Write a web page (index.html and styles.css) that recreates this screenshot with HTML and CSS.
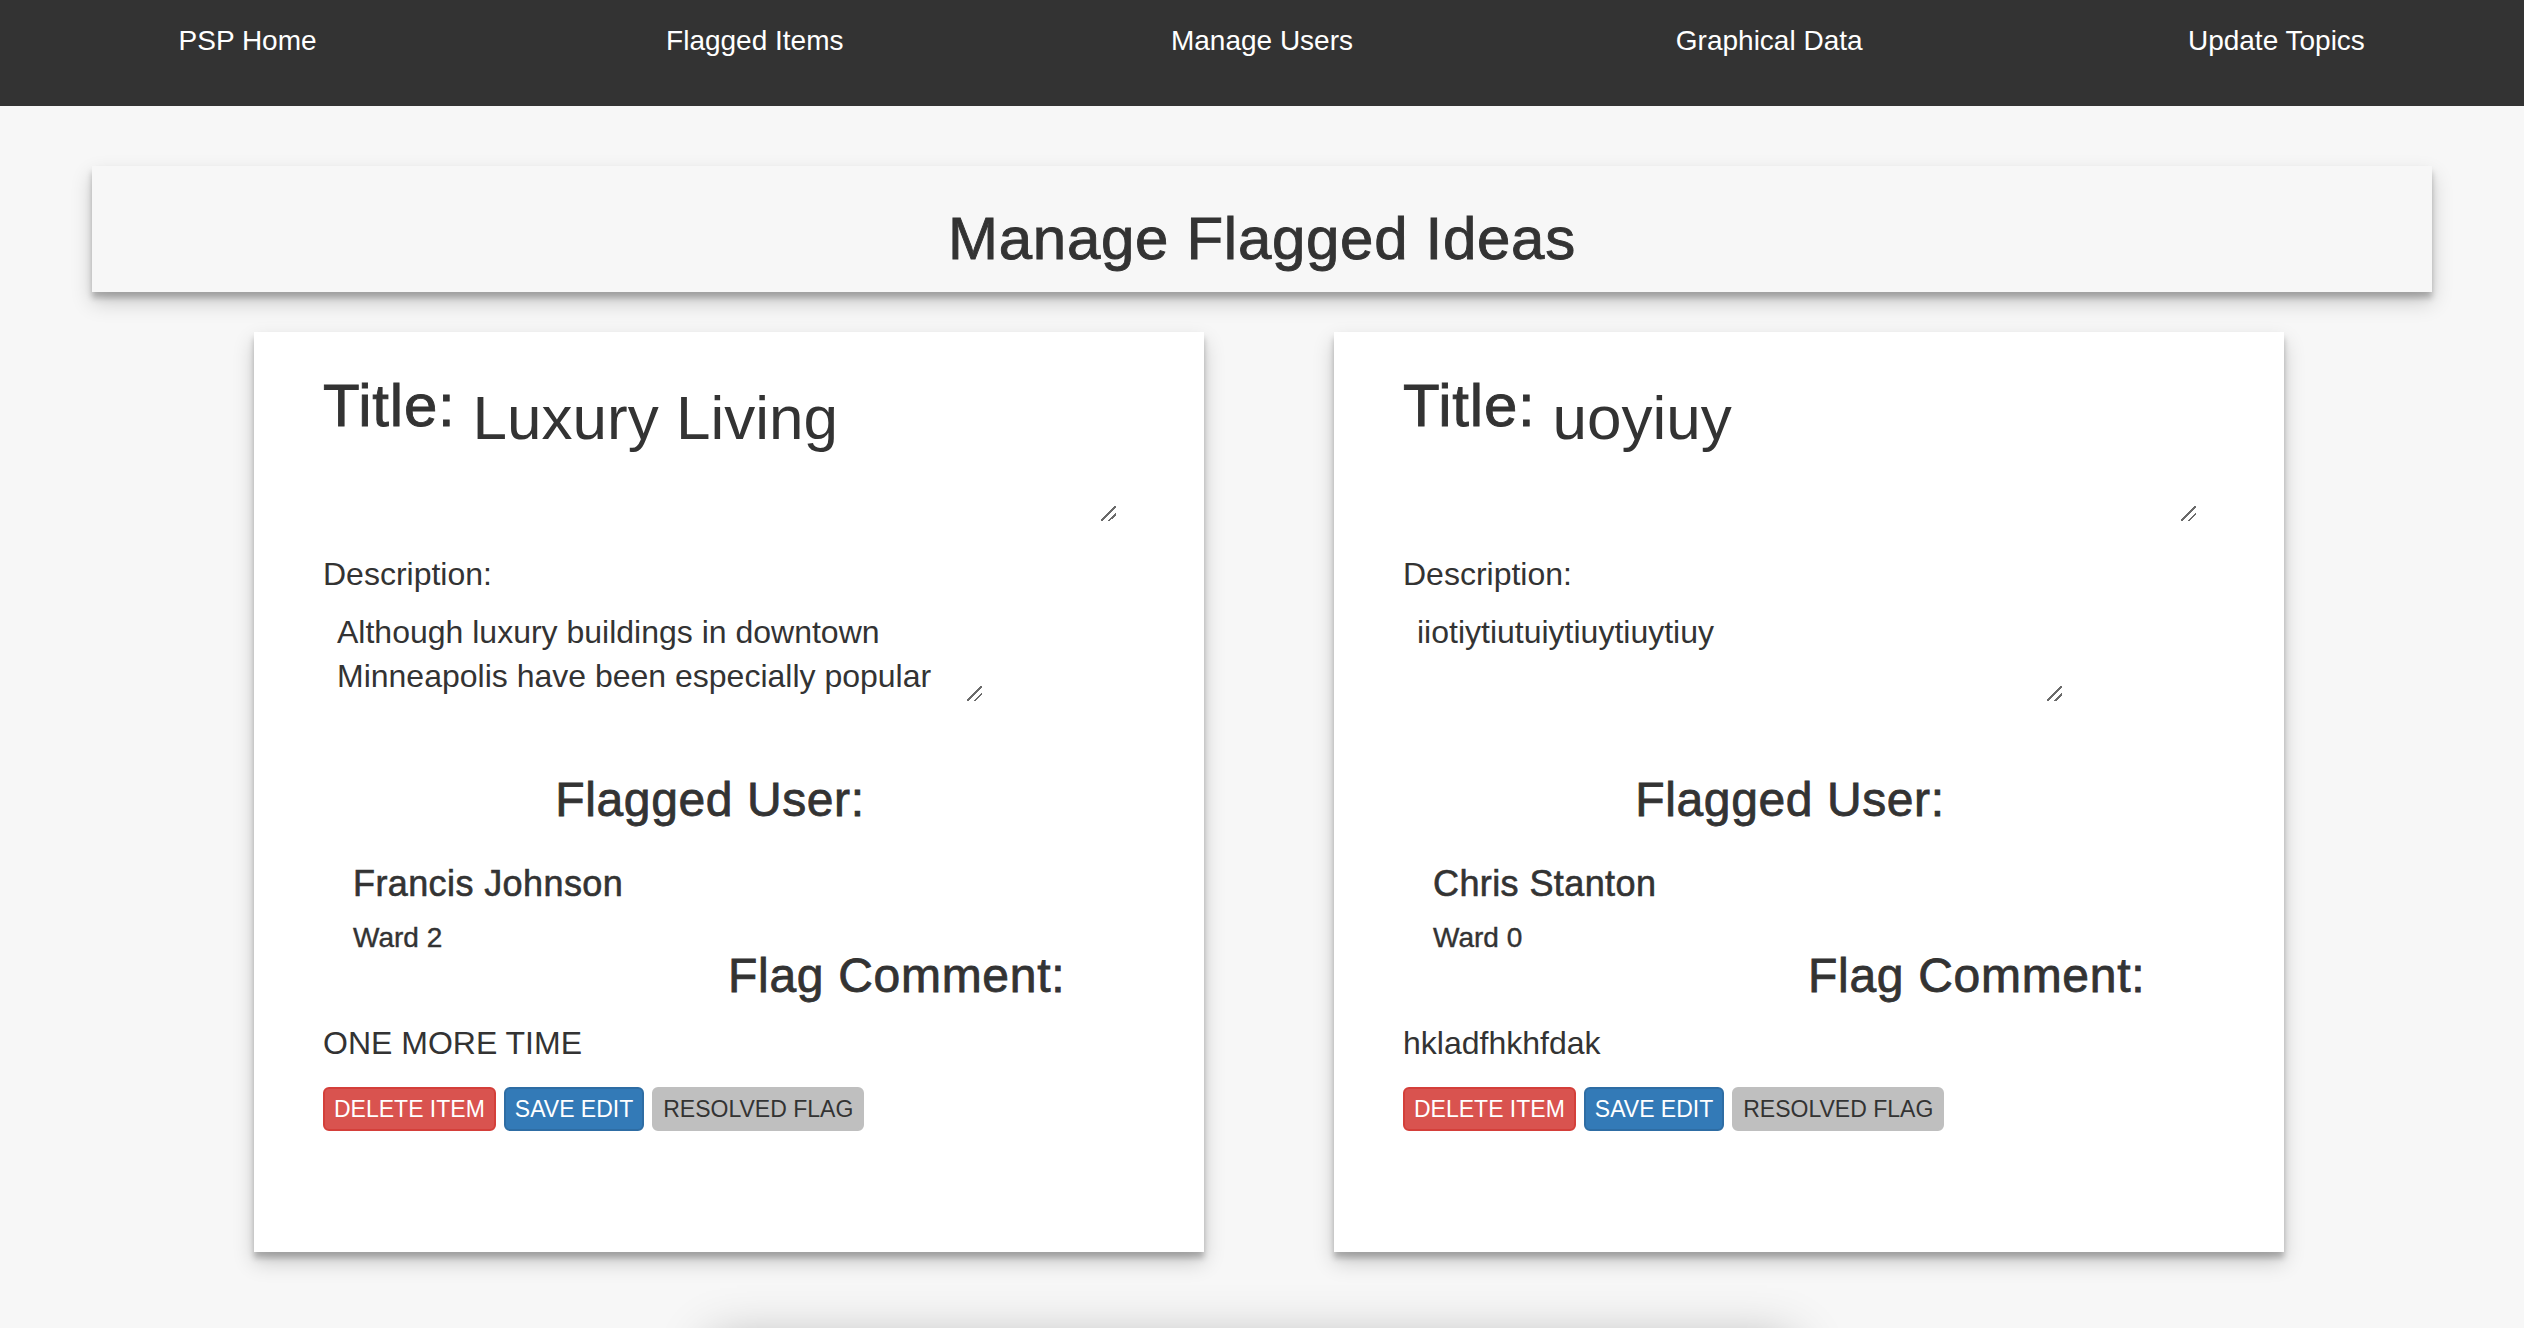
FILE: index.html
```html
<!DOCTYPE html>
<html lang="en">
<head>
<meta charset="utf-8">
<title>Manage Flagged Ideas</title>
<link rel="stylesheet" href="styles.css">
</head>
<body>
<nav class="navbar">
  <a class="nav-link">PSP Home</a>
  <a class="nav-link">Flagged Items</a>
  <a class="nav-link">Manage Users</a>
  <a class="nav-link">Graphical Data</a>
  <a class="nav-link">Update Topics</a>
</nav>
<main class="container">
  <header class="page-panel">
    <h2 class="page-title">Manage Flagged Ideas</h2>
  </header>
  <section class="card-row">
    <article class="flag-card">
      <div class="title-row">
        <h2 class="title-label">Title:</h2>
        <textarea class="title-input">Luxury Living</textarea>
      </div>
      <div class="desc-label">Description:</div>
      <textarea class="desc-input">Although luxury buildings in downtown Minneapolis have been especially popular among young professionals, many residents feel that more affordable housing is needed in the area.</textarea>
      <h3 class="section-head">Flagged User:</h3>
      <h4 class="user-name">Francis Johnson</h4>
      <h5 class="user-ward">Ward 2</h5>
      <h3 class="comment-head">Flag Comment:</h3>
      <p class="comment-text">ONE MORE TIME</p>
      <div class="btn-row">
        <button class="btn btn-danger">DELETE ITEM</button>
        <button class="btn btn-primary">SAVE EDIT</button>
        <button class="btn btn-gray">RESOLVED FLAG</button>
      </div>
    </article>
    <article class="flag-card">
      <div class="title-row">
        <h2 class="title-label">Title:</h2>
        <textarea class="title-input">uoyiuy</textarea>
      </div>
      <div class="desc-label">Description:</div>
      <textarea class="desc-input">iiotiytiutuiytiuytiuytiuy</textarea>
      <h3 class="section-head">Flagged User:</h3>
      <h4 class="user-name">Chris Stanton</h4>
      <h5 class="user-ward">Ward 0</h5>
      <h3 class="comment-head">Flag Comment:</h3>
      <p class="comment-text">hkladfhkhfdak</p>
      <div class="btn-row">
        <button class="btn btn-danger">DELETE ITEM</button>
        <button class="btn btn-primary">SAVE EDIT</button>
        <button class="btn btn-gray">RESOLVED FLAG</button>
      </div>
    </article>
  </section>
  <div class="next-card"></div>
</main>
</body>
</html>
```
FILE: styles.css
```css
html, body {
  margin: 0;
  padding: 0;
}
body {
  background: #f7f7f7;
  color: #333333;
  font-family: "Liberation Sans", Arial, sans-serif;
  overflow: hidden;
}

.navbar {
  display: grid;
  grid-template-columns: repeat(5, 1fr);
  height: 106px;
  box-sizing: border-box;
  padding-top: 21px;
  background: #333333;
  margin: 0 -6px;
}
.nav-link {
  color: #ffffff;
  font-size: 28px;
  line-height: 40px;
  text-align: center;
  text-decoration: none;
}

.container {
  width: 2340px;
  margin: 0 auto;
  padding-top: 60px;
}

.page-panel {
  height: 126px;
  box-sizing: border-box;
  padding-top: 40px;
  background: #f7f7f7;
  box-shadow: 0 10px 20px rgba(0, 0, 0, 0.19), 0 6px 6px rgba(0, 0, 0, 0.23);
}
.page-title {
  margin: 0;
  font-size: 60px;
  line-height: 66px;
  font-weight: 500;
  letter-spacing: 0.7px;
  -webkit-text-stroke: 0.9px #333333;
  text-align: center;
}

.card-row {
  display: flex;
  gap: 130px;
  padding-left: 162px;
  margin-top: 40px;
}
.flag-card {
  width: 950px;
  height: 920px;
  box-sizing: border-box;
  padding: 41px 107px 0 69px;
  background: #ffffff;
  box-shadow: 0 10px 20px rgba(0, 0, 0, 0.19), 0 6px 6px rgba(0, 0, 0, 0.23);
}

.title-row {
  display: flex;
  align-items: flex-start;
}
.title-label {
  margin: 0;
  flex-shrink: 0;
  font-size: 60px;
  line-height: 66px;
  font-weight: 500;
  letter-spacing: 0.8px;
  -webkit-text-stroke: 0.9px #333333;
}
textarea {
  font-family: "Liberation Sans", Arial, sans-serif;
  color: #333333;
  border: none;
  outline: none;
  background: #ffffff;
  box-sizing: border-box;
  overflow: hidden;
  resize: both;
}
textarea::-webkit-scrollbar {
  width: 16px;
  height: 16px;
  background: transparent;
}
textarea::-webkit-resizer {
  background: linear-gradient(135deg,
    transparent 0, transparent 46%,
    #6a6a6a 46%, #6a6a6a 55%,
    transparent 55%, transparent 71%,
    #6a6a6a 71%, #6a6a6a 80%,
    transparent 80%);
}
.title-input {
  flex-shrink: 0;
  margin: 12px 0 0 5px;
  width: 655px;
  height: 136px;
  padding: 0 12px;
  font-size: 62px;
  line-height: 66px;
}

.desc-label {
  margin-top: 31px;
  font-size: 32px;
  line-height: 44px;
}
.desc-input {
  display: block;
  margin-top: 6px;
  width: 659px;
  height: 99px;
  padding: 8px 14px 4px;
  font-size: 32px;
  line-height: 44px;
}

.section-head {
  margin: 72px 0 0;
  font-size: 48px;
  line-height: 53px;
  font-weight: 500;
  letter-spacing: 0.6px;
  -webkit-text-stroke: 0.8px #333333;
  text-align: center;
}
.user-name {
  margin: 38px 0 0 30px;
  font-size: 36px;
  line-height: 40px;
  font-weight: 500;
  letter-spacing: 0.4px;
  -webkit-text-stroke: 0.6px #333333;
}
.user-ward {
  margin: 22px 0 0 30px;
  font-size: 28px;
  line-height: 24px;
  font-weight: 500;
  -webkit-text-stroke: 0.4px #333333;
}
.comment-head {
  margin: 4px 0 0 405px;
  font-size: 48px;
  line-height: 44px;
  font-weight: 500;
  letter-spacing: 0.7px;
  -webkit-text-stroke: 0.8px #333333;
}
.comment-text {
  margin: 23px 0 0;
  font-size: 32px;
  line-height: 44px;
}

.btn-row {
  display: flex;
  gap: 8px;
  margin-top: 22px;
}
.btn {
  height: 44px;
  box-sizing: border-box;
  padding: 0 9px;
  border: 2px solid transparent;
  border-radius: 6px;
  font-family: "Liberation Sans", Arial, sans-serif;
  font-size: 23px;
  line-height: 40px;
}
.btn-danger {
  background: #d9534f;
  border-color: #d43f3a;
  color: #ffffff;
}
.btn-primary {
  background: #337ab7;
  border-color: #2e6da4;
  color: #ffffff;
}
.btn-gray {
  background: #bfbfbf;
  border-color: #bfbfbf;
  color: #333333;
}

.next-card {
  width: 1080px;
  height: 300px;
  margin: 90px 0 0 620px;
  background: #f7f7f7;
  box-shadow: 0 0 50px rgba(0, 0, 0, 0.3);
}
```
